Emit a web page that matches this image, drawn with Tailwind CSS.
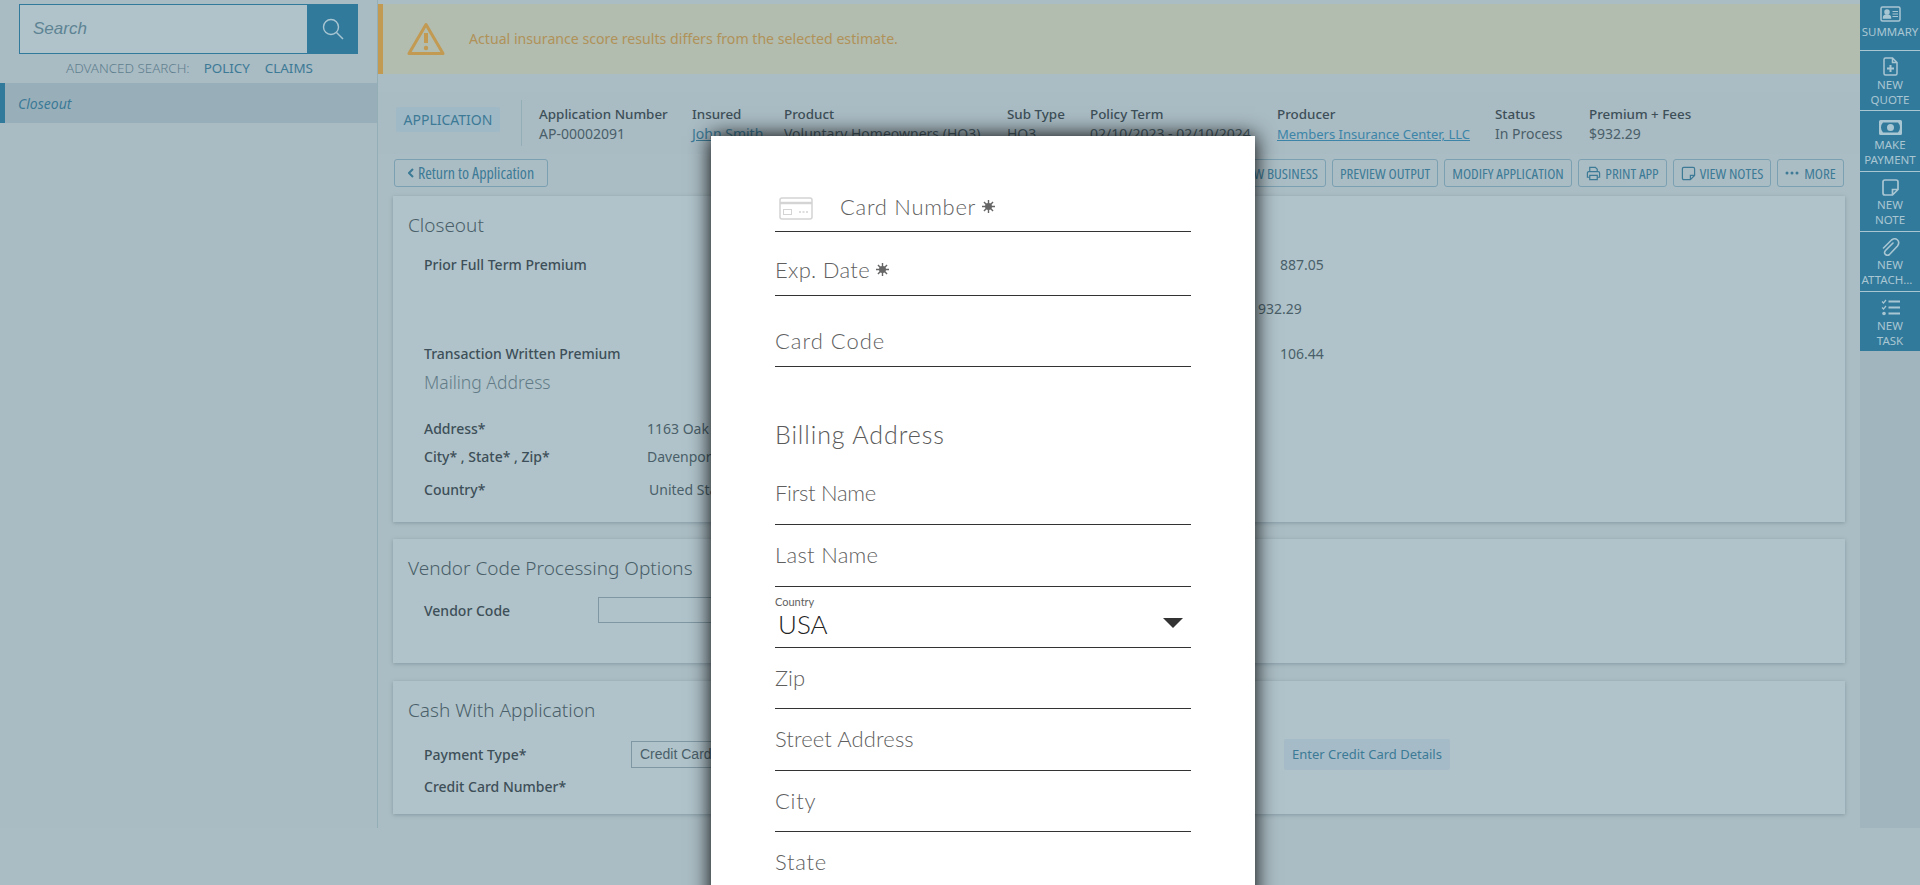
<!DOCTYPE html>
<html lang="en">
<head>
    <meta charset="UTF-8">
    <meta name="viewport" content="width=device-width, initial-scale=1.0">
    <title>Closeout</title>
    <script src="https://cdn.jsdelivr.net/npm/@tailwindcss/browser@4"></script>
</head>
<body class="relative h-[885px] overflow-hidden bg-[#abbdc4] font-['Noto_Sans',sans-serif] text-[14px] text-[#4a5f69]">

    <div class="flex h-[828px]">

        <!-- Left navigation -->
        <aside class="w-[378px] shrink-0 border-r border-[#94aeb8] bg-[#a9bbc3]">
            <div class="flex h-[50px] pl-[19px] mt-[4px]">
                <div class="flex w-[289px] items-center border border-[#327a9b] bg-[#b0c3ca] pl-[13px] font-['Liberation_Sans',sans-serif] text-[17px] italic text-[#5e8494]">Search</div>
                <div class="flex w-[50px] items-center justify-center bg-[#327a9b]">
                    <svg class="h-[24px] w-[24px]" viewBox="0 0 24 24" fill="none" stroke="#a9c6d3" stroke-width="1.4"><circle cx="10" cy="10" r="7.5"/><path d="M15.5 15.5 22 22"/></svg>
                </div>
            </div>
            <div class="flex h-[29px] items-center pl-[66px] text-[13.4px] text-[#5e7f8e]">
                <span class="font-light">ADVANCED SEARCH:</span>
                <span class="ml-[14px] text-[#3c7a96]">POLICY</span>
                <span class="ml-[15px] text-[#3c7a96]">CLAIMS</span>
            </div>
            <div class="flex h-[40px] items-center border-l-[5px] border-[#327a9b] bg-[#98afba] pl-[13px] italic text-[#3c7a96]">Closeout</div>
        </aside>

        <main class="min-w-0 flex-1">
            <!-- Alert -->
            <div class="mt-[4px] flex h-[70px] items-center border-l-[5px] border-[#c29a52] bg-[#b2bcaf] pl-[24px] text-[14.15px] text-[#b09259]">
                <svg class="h-[34px] w-[38px]" viewBox="0 0 38 34" fill="none"><path d="M19 2.5 2 31.5h34Z" stroke="#c29a52" stroke-width="3" stroke-linejoin="round"/><path d="M19 11v10" stroke="#c29a52" stroke-width="4"/><circle cx="19" cy="26" r="2.2" fill="#c29a52"/></svg>
                <span class="ml-[24px]">Actual insurance score results differs from the selected estimate.</span>
            </div>

            <!-- Application header -->
            <div class="mt-[18px] flex h-[62px] items-center bg-[#a9bbc3] pl-[18px] pt-[2px]">
                <div class="mt-[-10px] flex h-[25px] w-[104px] items-center justify-center rounded-[2px] bg-[#a0b9c6] text-[#3c7a96]">APPLICATION</div>
                <div class="ml-[21px] mr-[17px] mt-[-2px] h-[46px] w-px bg-[#94aeb8]"></div>
                <div class="w-[153px]"><p class="text-[13.4px] font-medium leading-[20px] text-[#3d4f58]">Application Number</p><p class="leading-[20px]">AP-00002091</p></div>
                <div class="w-[92px]"><p class="text-[13.4px] font-medium leading-[20px] text-[#3d4f58]">Insured</p><p class="leading-[20px] text-[#3c7a96] underline">John Smith</p></div>
                <div class="w-[223px]"><p class="text-[13.4px] font-medium leading-[20px] text-[#3d4f58]">Product</p><p class="leading-[20px]">Voluntary Homeowners (HO3)</p></div>
                <div class="w-[83px]"><p class="text-[13.4px] font-medium leading-[20px] text-[#3d4f58]">Sub Type</p><p class="leading-[20px]">HO3</p></div>
                <div class="w-[187px]"><p class="text-[13.4px] font-medium leading-[20px] text-[#3d4f58]">Policy Term</p><p class="leading-[20px]">02/10/2023 - 02/10/2024</p></div>
                <div class="w-[218px]"><p class="text-[13.4px] font-medium leading-[20px] text-[#3d4f58]">Producer</p><p class="text-[13px] leading-[20px] text-[#3c85a8] underline">Members Insurance Center, LLC</p></div>
                <div class="w-[94px]"><p class="text-[13.4px] font-medium leading-[20px] text-[#3d4f58]">Status</p><p class="leading-[20px]">In Process</p></div>
                <div><p class="text-[13.4px] font-medium leading-[20px] text-[#3d4f58]">Premium + Fees</p><p class="leading-[20px]">$932.29</p></div>
            </div>

            <!-- Toolbar -->
            <div class="flex h-[42px] items-start justify-between pl-[16px] pr-[16px] pt-[5px] font-['Open_Sans',sans-serif] text-[15px] whitespace-nowrap text-[#3c7a96]">
                <button class="flex h-[28px] w-[154px] items-center justify-center gap-[4px] rounded-[3px] border border-[#7ba0b1] text-[16px] font-medium font-stretch-condensed">
                    <svg class="h-[10px] w-[6px]" viewBox="0 0 6 10" fill="none" stroke="#3c7a96" stroke-width="2"><path d="M5 1 1 5l4 4"/></svg>Return to Application
                </button>
                <div class="flex gap-[6px] font-stretch-condensed">
                    <button class="flex h-[28px] w-[150px] items-center justify-end rounded-[3px] border border-[#7ba0b1] pr-[7px]">NEW BUSINESS</button>
                    <button class="h-[28px] w-[106px] rounded-[3px] border border-[#7ba0b1]">PREVIEW OUTPUT</button>
                    <button class="h-[28px] w-[128px] rounded-[3px] border border-[#7ba0b1]">MODIFY APPLICATION</button>
                    <button class="flex h-[28px] w-[89px] items-center justify-center gap-[4px] rounded-[3px] border border-[#7ba0b1]">
                        <svg class="h-[15px] w-[15px]" viewBox="0 0 16 16" fill="none" stroke="#3c7a96" stroke-width="1.3"><path d="M4 6V1.500h6L12 3.500V6M4 12H1.500V7.500q0-1.500 1.500-1.500h10q1.500 0 1.500 1.500V12H12"/><path d="M4 10h8v4.500H4z"/></svg>PRINT APP
                    </button>
                    <button class="flex h-[28px] w-[98px] items-center justify-center gap-[4px] rounded-[3px] border border-[#7ba0b1]">
                        <svg class="h-[15px] w-[15px]" viewBox="0 0 16 16" fill="none" stroke="#3c7a96" stroke-width="1.3"><path d="M10 14.500H3q-1.500 0-1.500-1.500V3q0-1.500 1.500-1.500h10q1.500 0 1.500 1.500v7ZM10 14.500V10h4.500"/></svg>VIEW NOTES
                    </button>
                    <button class="flex h-[28px] w-[67px] items-center justify-center gap-[5px] rounded-[3px] border border-[#7ba0b1]">
                        <svg class="h-[4px] w-[14px]" viewBox="0 0 14 4" fill="#3c7a96"><circle cx="2" cy="2" r="1.500"/><circle cx="7" cy="2" r="1.500"/><circle cx="12" cy="2" r="1.500"/></svg>MORE
                    </button>
                </div>
            </div>

            <!-- Closeout card -->
            <section class="ml-[15px] mr-[15px] h-[326px] bg-[#b0c3ca] pl-[15px] pt-[16px] shadow-[0_1px_4px_rgba(60,90,105,0.35)]">
                <h2 class="text-[19px] leading-[26px] font-light text-[#4a5f69]">Closeout</h2>
                <div class="mt-[16px] ml-[16px] flex h-[20px] items-center"><span class="w-[856px] font-medium text-[#3d4f58]">Prior Full Term Premium</span>887.05</div>
                <div class="mt-[24px] ml-[850px] flex h-[20px] items-center">932.29</div>
                <div class="mt-[25px] ml-[16px] flex h-[20px] items-center"><span class="w-[856px] font-medium text-[#3d4f58]">Transaction Written Premium</span>106.44</div>
                <h3 class="mt-[5px] ml-[16px] text-[17.500px] leading-[28px] font-light text-[#627b87]">Mailing Address</h3>
                <div class="mt-[22px] ml-[16px] flex h-[20px] items-center"><span class="w-[223px] font-medium text-[#3d4f58]">Address*</span>1163 Oak Street</div>
                <div class="mt-[8px] ml-[16px] flex h-[20px] items-center"><span class="w-[223px] font-medium text-[#3d4f58]">City* , State* , Zip*</span>Davenport</div>
                <div class="mt-[13px] ml-[16px] flex h-[20px] items-center"><span class="w-[225px] font-medium text-[#3d4f58]">Country*</span>United States</div>
            </section>

            <!-- Vendor card -->
            <section class="ml-[15px] mr-[15px] mt-[17px] h-[124px] bg-[#b0c3ca] pl-[15px] pt-[16px] shadow-[0_1px_4px_rgba(60,90,105,0.35)]">
                <h2 class="text-[19px] leading-[26px] font-light text-[#4a5f69]">Vendor Code Processing Options</h2>
                <div class="mt-[16px] ml-[16px] flex h-[26px] items-center">
                    <span class="w-[174px] font-medium text-[#3d4f58]">Vendor Code</span>
                    <div class="h-[26px] w-[130px] border border-[#7f97a2]"></div>
                </div>
            </section>

            <!-- Cash with application card -->
            <section class="ml-[15px] mr-[15px] mt-[18px] h-[133px] bg-[#b0c3ca] pl-[15px] pt-[16px] shadow-[0_1px_4px_rgba(60,90,105,0.35)]">
                <h2 class="text-[19px] leading-[26px] font-light text-[#4a5f69]">Cash With Application</h2>
                <div class="mt-[16px] ml-[16px] flex h-[31px] items-center">
                    <span class="w-[207px] font-medium text-[#3d4f58]">Payment Type*</span>
                    <div class="flex h-[27px] w-[150px] items-center border border-[#7f97a2] pl-[8px] font-['Liberation_Sans',sans-serif] text-[14px]">Credit Card</div>
                    <button class="ml-[503px] h-[31px] w-[166px] rounded-[2px] bg-[#a5bcc8] text-[13px] text-[#3c7a96]">Enter Credit Card Details</button>
                </div>
                <div class="mt-[6px] ml-[16px] flex h-[20px] items-center font-medium text-[#3d4f58]">Credit Card Number*</div>
            </section>
        </main>

        <!-- Right action rail -->
        <nav class="flex w-[60px] shrink-0 flex-col bg-[#a0b5bd] text-center text-[11.5px] leading-[15px] text-[#a9c6d3]">
            <a class="flex h-[51px] flex-col items-center border-b border-[#a9c6d3] bg-[#327a9b] pt-[6px]">
                <svg class="h-[16px] w-[21px]" viewBox="0 0 21 16" fill="none" stroke="#a9c6d3" stroke-width="1.500"><rect x="1" y="1" width="19" height="14" rx="1.500"/><circle cx="7" cy="6" r="2" fill="#a9c6d3"/><path d="M3.500 12q0-3 3.500-3t3.500 3z" fill="#a9c6d3"/><path d="M12.500 5.500H18M12.500 8H18M12.500 10.500H18" stroke-width="1.200"/></svg>
                <span class="mt-[2px]">SUMMARY</span>
            </a>
            <a class="flex h-[60px] flex-col items-center border-b border-[#a9c6d3] bg-[#327a9b] pt-[6px]">
                <svg class="h-[19px] w-[15px]" viewBox="0 0 15 19" fill="none" stroke="#a9c6d3" stroke-width="1.500"><path d="M9.500 1H2.500Q1 1 1 2.500v14Q1 18 2.500 18h10q1.500 0 1.500-1.500V5.500ZM9.500 1v4.500H14"/><path d="M7.500 8v7M4 11.500h7" stroke-width="2"/></svg>
                <span class="mt-[1px]">NEW<br>QUOTE</span>
            </a>
            <a class="flex h-[61px] flex-col items-center border-b border-[#a9c6d3] bg-[#327a9b] pt-[9px]">
                <svg class="h-[15px] w-[23px]" viewBox="0 0 23 15"><path fill="#a9c6d3" fill-rule="evenodd" d="M1.500 0h20Q23 0 23 1.500v12q0 1.500-1.500 1.500h-20Q0 15 0 13.500v-12Q0 0 1.500 0ZM4 2.500Q2 4.500 2 7.500t2 5h15q2-2 2-5t-2-5ZM11.500 4a3.500 3.500 0 1 1 0 7 3.500 3.500 0 0 1 0-7Z"/></svg>
                <span class="mt-[2px]">MAKE<br>PAYMENT</span>
            </a>
            <a class="flex h-[60px] flex-col items-center border-b border-[#a9c6d3] bg-[#327a9b] pt-[7px]">
                <svg class="h-[17px] w-[17px]" viewBox="0 0 17 17" fill="none" stroke="#a9c6d3" stroke-width="1.700"><path d="M10.500 16H3q-2 0-2-2V3q0-2 2-2h11q2 0 2 2v7.500ZM10.500 16v-5.500H16"/></svg>
                <span class="mt-[1px]">NEW<br>NOTE</span>
            </a>
            <a class="flex h-[60px] flex-col items-center border-b border-[#a9c6d3] bg-[#327a9b] pt-[6px]">
                <svg class="h-[20px] w-[19px]" viewBox="0 0 19 20" fill="none" stroke="#a9c6d3" stroke-width="1.600" stroke-linecap="round"><path d="M12 5 4.500 12.500q-2 2.500 0 4t4 0L16.500 8q2.500-3.500 0-6t-6 0L2.500 10"/></svg>
                <span class="mt-[-1px]">NEW<br><span class="block w-[60px] whitespace-nowrap pr-[6px]">ATTACH...</span></span>
            </a>
            <a class="flex h-[59px] flex-col items-center bg-[#327a9b] pt-[7px]">
                <svg class="h-[17px] w-[19px]" viewBox="0 0 19 17" fill="none" stroke="#a9c6d3"><path d="M1 2.500 2.500 4 5 1M1 8.500 2.500 10 5 7" stroke-width="1.200"/><circle cx="3" cy="14.500" r="1.800" fill="#a9c6d3" stroke="none"/><path d="M7.500 2.500H19M7.500 8.500H19M7.500 14.500H19" stroke-width="2"/></svg>
                <span class="mt-[2px]">NEW<br>TASK</span>
            </a>
        </nav>
    </div>

    <!-- Credit card dialog -->
    <div class="absolute left-[711px] top-[136px] h-[780px] w-[544px] bg-white px-[64px] font-['Lato',sans-serif] text-[22px] font-light leading-[20px] tracking-[0.7px] text-[#5f5f5f] shadow-[0_0_20px_rgba(0,0,0,1)]">
        <div class="flex h-[96px] items-end border-b border-[#333333] pb-[14px]">
            <svg class="mb-[-3px] ml-[4px] mr-[27px] h-[23px] w-[34px]" viewBox="0 0 34 23" fill="none" stroke="#d4d4d4" stroke-width="1.500"><rect x="1" y="1" width="32" height="21" rx="2"/><path d="M1 6h32" stroke-width="2.500"/><rect x="4.500" y="12.500" width="8" height="5" stroke-width="1"/><path d="M20 15h9" stroke-width="1.500" stroke-dasharray="2 1.500"/></svg>
            <span>Card Number</span>
            <svg class="mb-[4px] ml-[6px] h-[13px] w-[13px]" viewBox="0 0 12 12" fill="#666666" stroke="#666666"><circle cx="6" cy="6" r="3.200" stroke="none"/><path d="M6 0v12M0 6h12M1.800 1.800l8.400 8.400M10.200 1.800l-8.400 8.400" stroke-width="1.300"/></svg>
        </div>
        <div class="flex h-[64px] items-end border-b border-[#333333] pb-[15px]">
            <span class="tracking-[0.300px]">Exp. Date</span>
            <svg class="mb-[4px] ml-[6px] h-[13px] w-[13px]" viewBox="0 0 12 12" fill="#666666" stroke="#666666"><circle cx="6" cy="6" r="3.200" stroke="none"/><path d="M6 0v12M0 6h12M1.800 1.800l8.400 8.400M10.200 1.800l-8.400 8.400" stroke-width="1.300"/></svg>
        </div>
        <div class="flex h-[71px] items-end border-b border-[#333333] pb-[15px] tracking-[1px]">Card Code</div>
        <h2 class="flex h-[92px] items-end pb-[13px] text-[25px] leading-[24px] tracking-[0.900px] text-[#5a5a5a]">Billing Address</h2>
        <div class="flex h-[66px] items-end border-b border-[#333333] pb-[21px] tracking-[-0.300px]">First Name</div>
        <div class="flex h-[62px] items-end border-b border-[#333333] pb-[21px] tracking-[0.300px]">Last Name</div>
        <div class="relative h-[61px] border-b border-[#333333] pt-[9px]">
            <p class="text-[11px] font-normal leading-[12px] tracking-normal">Country</p>
            <p class="ml-[3px] mt-[1px] text-[26px] leading-[30px] tracking-normal text-[#222222]">USA</p>
            <svg class="absolute right-[8px] top-[31px] h-[10px] w-[20px]" viewBox="0 0 20 10" fill="#333333"><path d="M0 0h20L10 10Z"/></svg>
        </div>
        <div class="flex h-[61px] items-end border-b border-[#333333] pb-[20px] tracking-normal">Zip</div>
        <div class="flex h-[62px] items-end border-b border-[#333333] pb-[21px] tracking-[0.100px]">Street Address</div>
        <div class="flex h-[61px] items-end border-b border-[#333333] pb-[20px]">City</div>
        <div class="flex h-[62px] items-end border-b border-[#333333] pb-[21px]">State</div>
    </div>

</body>
</html>
